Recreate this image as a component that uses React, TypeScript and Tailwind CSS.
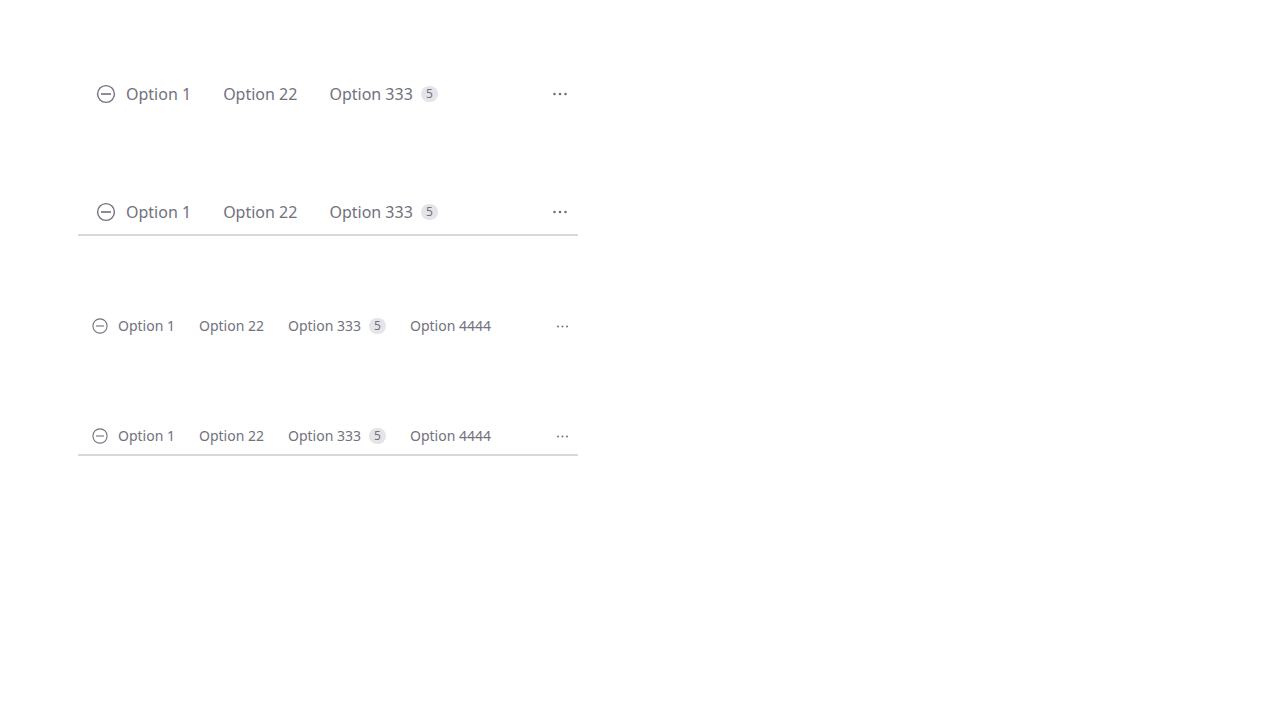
type Size = 'm' | 's';

const labels = ['Option 1', 'Option 22', 'Option 333', 'Option 4444'];

function MinusCircle({ size }: { size: Size }) {
  return (
    <svg aria-hidden="true" viewBox={size === 'm' ? '0 0 24 24' : '0 0 20 20'} className={size === 'm' ? 'size-6' : 'size-5'} fill="none" stroke="currentColor">
      {size === 'm' ? (
        <g strokeWidth="1.4"><circle cx="12" cy="12" r="8.4" /><path d="M7 12h10" strokeWidth="1.6" /></g>
      ) : (
        <g strokeWidth="1.1"><circle cx="10" cy="10" r="7.1" /><path d="M6 10h8" /></g>
      )}
    </svg>
  );
}

function Dots({ size }: { size: Size }) {
  return (
    <svg aria-hidden="true" viewBox={size === 'm' ? '0 0 24 24' : '0 0 20 20'} className={size === 'm' ? 'size-6' : 'size-5'} fill="currentColor">
      {size === 'm' ? (
        <g><circle cx="6.5" cy="12" r="1.3" /><circle cx="12" cy="12" r="1.3" /><circle cx="17.5" cy="12" r="1.3" /></g>
      ) : (
        <g><circle cx="6" cy="10.5" r="1" /><circle cx="10.5" cy="10.5" r="1" /><circle cx="15" cy="10.5" r="1" /></g>
      )}
    </svg>
  );
}

function TabBar({ size, underline = false }: { size: Size; underline?: boolean }) {
  const m = size === 'm';
  return (
    <nav aria-label="Options" className={`flex items-center justify-between border-b-2 pt-0.5 ${underline ? 'border-[#d7d7de]' : 'border-transparent'} ${m ? 'h-12 pl-4 pr-1.5' : 'h-10 pl-3 pr-1.5'}`}>
      <div className={`flex items-center ${m ? 'gap-8 text-base' : 'gap-6 text-sm'}`}>
        {labels.slice(0, m ? 3 : 4).map((label, i) => (
          <button key={label} type="button" className="flex items-center gap-2 whitespace-nowrap">
            {i === 0 && <MinusCircle size={size} />}
            <span>{label}</span>
            {i === 2 && <span className="flex h-4 w-[17px] items-center justify-center rounded-full bg-[#e4e4e9] text-xs">5</span>}
          </button>
        ))}
      </div>
      <button type="button" aria-label="More options"><Dots size={size} /></button>
    </nav>
  );
}

export default function App() {
  return (
    <main className="min-h-screen bg-white px-[78px] pt-[70px] font-['Noto_Sans',sans-serif] text-[#72717d]">
      <div className="flex w-full max-w-[500px] flex-col gap-[70px]">
        <TabBar size="m" />
        <TabBar size="m" underline />
        <TabBar size="s" />
        <TabBar size="s" underline />
      </div>
    </main>
  );
}
